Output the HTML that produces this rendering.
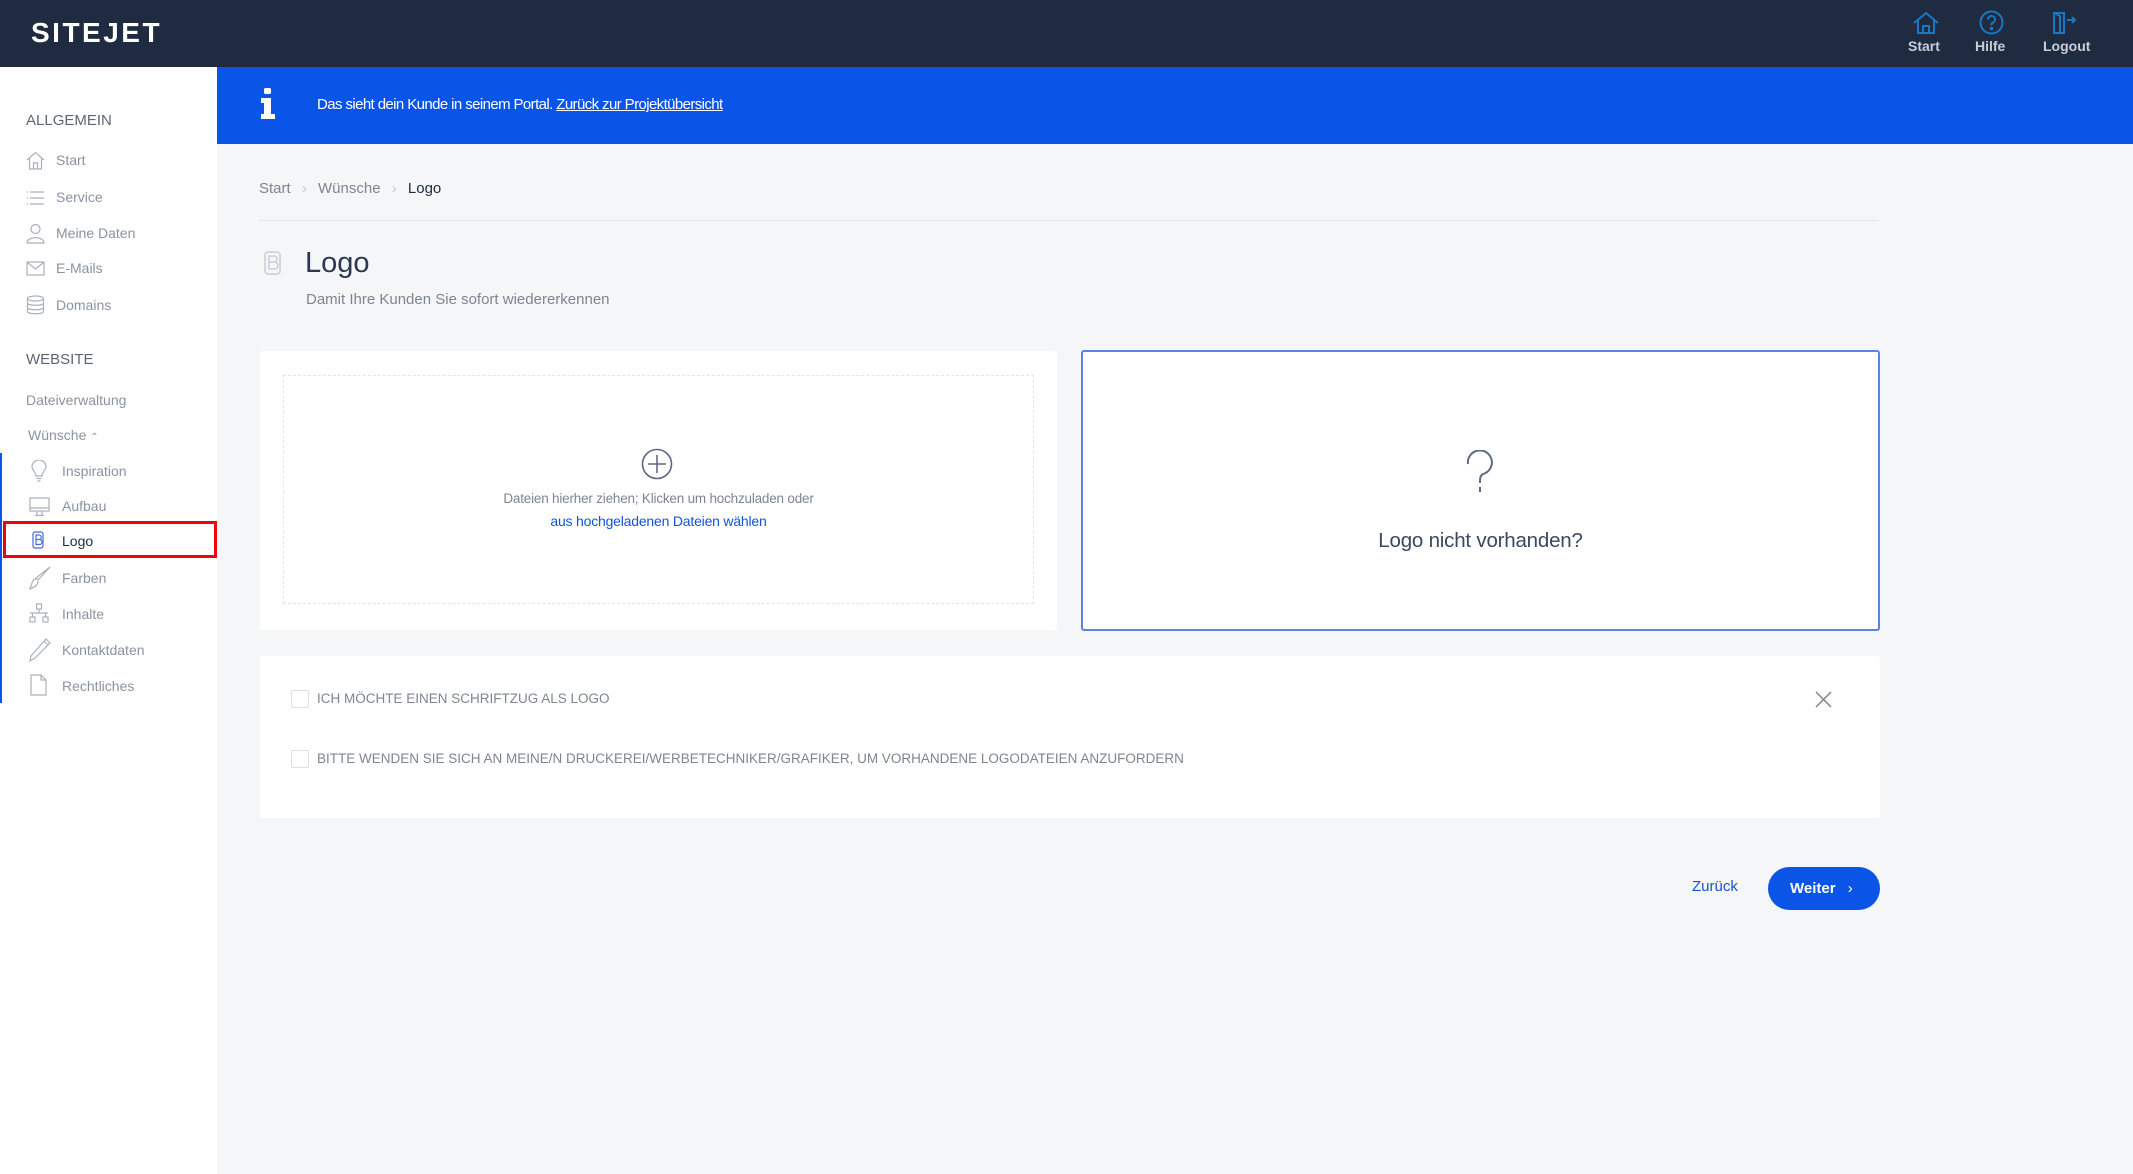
<!DOCTYPE html>
<html><head><meta charset="utf-8"><style>
*{margin:0;padding:0;box-sizing:border-box}
body{width:2133px;height:1174px;position:relative;overflow:hidden;background:#f5f6f8;font-family:"Liberation Sans",sans-serif;color:#8a93a0}
.a{position:absolute}
#hdr{left:0;top:0;width:2133px;height:67px;background:#1e2b40}
#side{left:0;top:67px;width:217px;height:1107px;background:#fff}
#ban{left:217px;top:67px;width:1916px;height:77px;background:#0a55e8}
.si{position:absolute;font-size:14px;color:#8a93a0;white-space:nowrap}
.ic{position:absolute}
.card{position:absolute;background:#fff;border-radius:3px}
.cb{position:absolute;width:18px;height:18px;border:1px solid #dde1e6;border-radius:2px;background:#fff}
.ct{position:absolute;font-size:13.5px;color:#7d8591;white-space:nowrap;letter-spacing:0px}
</style></head><body>
<div id="hdr" class="a"></div>
<div class="a" style="left:31px;top:17px;font-size:28px;font-weight:bold;color:#fff;letter-spacing:2.5px">SITEJET</div>
<svg class="a" style="left:1912px;top:11px" width="28" height="24" viewBox="0 0 28 24" fill="none" stroke="#1a78c2" stroke-width="2"><path d="M2 12 L14 2 L26 12 M6 9 V22 H22 V9 M11 22 V15 H17 V22"/></svg>
<div class="a" style="left:1908px;top:38px;font-size:14px;font-weight:bold;color:#c9ced6">Start</div>
<svg class="a" style="left:1979px;top:10px" width="25" height="25" viewBox="0 0 25 25" fill="none" stroke="#1a78c2" stroke-width="2"><circle cx="12.5" cy="12.5" r="11"/><path d="M9 9.5a3.5 3.5 0 1 1 4.5 3.3c-1 .4-1 1-1 2.5"/><circle cx="12.5" cy="18.5" r=".8" fill="#1a78c2"/></svg>
<div class="a" style="left:1975px;top:38px;font-size:14px;font-weight:bold;color:#c9ced6">Hilfe</div>
<svg class="a" style="left:2052px;top:11px" width="26" height="24" viewBox="0 0 26 24" fill="none" stroke="#1a78c2" stroke-width="2"><path d="M2 2 H12 V22 H2 Z M2 2 L8 5 V22 M15 9 H23 M20 6 L23 9 L20 12"/></svg>
<div class="a" style="left:2043px;top:38px;font-size:14px;font-weight:bold;color:#c9ced6">Logout</div>

<div id="side" class="a"></div>
<div class="si" style="left:26px;top:112px;font-size:15px;color:#5d6674">ALLGEMEIN</div>
<svg class="ic" style="left:26px;top:151px" width="19" height="19" viewBox="0 0 19 19" fill="none" stroke="#aab1bb" stroke-width="1.2"><path d="M1 9 L9.5 1.5 L18 9 M3.5 7 V18 H15.5 V7 M7.5 18 V12 H11.5 V18"/></svg>
<div class="si" style="left:56px;top:152px">Start</div>
<svg class="ic" style="left:26px;top:190px" width="19" height="16" viewBox="0 0 19 16" fill="none" stroke="#aab1bb" stroke-width="1.2"><path d="M4 2 H18 M4 8 H18 M4 14 H18 M1 2 H2 M1 8 H2 M1 14 H2"/></svg>
<div class="si" style="left:56px;top:189px">Service</div>
<svg class="ic" style="left:26px;top:223px" width="19" height="21" viewBox="0 0 19 21" fill="none" stroke="#aab1bb" stroke-width="1.2"><circle cx="9.5" cy="6" r="4.5"/><path d="M1 20 C1 13 18 13 18 20 Z"/></svg>
<div class="si" style="left:56px;top:225px">Meine Daten</div>
<svg class="ic" style="left:26px;top:261px" width="19" height="15" viewBox="0 0 19 15" fill="none" stroke="#aab1bb" stroke-width="1.2"><rect x="1" y="1" width="17" height="13"/><path d="M1 1 L9.5 8 L18 1"/></svg>
<div class="si" style="left:56px;top:260px">E-Mails</div>
<svg class="ic" style="left:26px;top:295px" width="19" height="20" viewBox="0 0 19 20" fill="none" stroke="#aab1bb" stroke-width="1.2"><ellipse cx="9.5" cy="3.5" rx="8" ry="2.5"/><path d="M1.5 3.5 V16.5 C1.5 19.5 17.5 19.5 17.5 16.5 V3.5 M1.5 8 C1.5 11 17.5 11 17.5 8 M1.5 12.5 C1.5 15.5 17.5 15.5 17.5 12.5"/></svg>
<div class="si" style="left:56px;top:297px">Domains</div>
<div class="si" style="left:26px;top:351px;font-size:15px;color:#5d6674">WEBSITE</div>
<div class="si" style="left:26px;top:392px">Dateiverwaltung</div>
<div class="si" style="left:28px;top:427px">Wünsche <span style="font-size:10px">&#8963;</span></div>
<div class="a" style="left:0;top:453px;width:2px;height:250px;background:#0a55e8"></div>
<svg class="ic" style="left:31px;top:460px" width="16" height="22" viewBox="0 0 16 22" fill="none" stroke="#aab1bb" stroke-width="1.2"><path d="M5 16 C5 12 1 10 1 7 A7 7 0 0 1 15 7 C15 10 11 12 11 16 Z M5.5 18.5 H10.5 M6.5 21 H9.5"/></svg>
<div class="si" style="left:62px;top:463px">Inspiration</div>
<svg class="ic" style="left:29px;top:497px" width="21" height="20" viewBox="0 0 21 20" fill="none" stroke="#aab1bb" stroke-width="1.2"><rect x="1" y="1" width="19" height="13"/><path d="M1 11 H20 M8 14 V18 M13 14 V18 M6 18.5 H15"/></svg>
<div class="si" style="left:62px;top:498px">Aufbau</div>
<div class="a" style="left:3px;top:521px;width:214px;height:37px;border:3px solid #e8070d"></div>
<svg class="ic" style="left:32px;top:531px" width="12" height="18" viewBox="0 0 12 18" fill="none" stroke="#4a6ad8" stroke-width="1.2"><rect x="1" y="1" width="10" height="16" rx="2"/><path d="M4 4 H7 A2 2 0 0 1 7 8.5 H4 Z M4 8.5 H7.5 A2.3 2.3 0 0 1 7.5 13.5 H4 Z"/></svg>
<div class="si" style="left:62px;top:533px;color:#1e2b40">Logo</div>
<svg class="ic" style="left:29px;top:566px" width="22" height="24" viewBox="0 0 22 24" fill="none" stroke="#aab1bb" stroke-width="1.2"><path d="M21 1 L9 14 L7 12 Z M7 13 C3 13 3 18 1 23 C6 21 9 19 9 15"/></svg>
<div class="si" style="left:62px;top:570px">Farben</div>
<svg class="ic" style="left:29px;top:603px" width="20" height="20" viewBox="0 0 20 20" fill="none" stroke="#aab1bb" stroke-width="1.2"><rect x="7.5" y="1" width="5" height="5"/><rect x="1" y="14" width="5" height="5"/><rect x="14" y="14" width="5" height="5"/><path d="M10 6 V10 M1 10 H19 M3.5 10 V14 M16.5 10 V14"/></svg>
<div class="si" style="left:62px;top:606px">Inhalte</div>
<svg class="ic" style="left:29px;top:638px" width="22" height="24" viewBox="0 0 22 24" fill="none" stroke="#aab1bb" stroke-width="1.2"><path d="M17 1 L21 5 L6 20 L1 23 L2 18 Z M15 3 L19 7"/></svg>
<div class="si" style="left:62px;top:642px">Kontaktdaten</div>
<svg class="ic" style="left:30px;top:674px" width="17" height="22" viewBox="0 0 17 22" fill="none" stroke="#aab1bb" stroke-width="1.2"><path d="M1 1 H11 L16 6 V21 H1 Z M11 1 V6 H16"/></svg>
<div class="si" style="left:62px;top:678px">Rechtliches</div>

<div id="ban" class="a"></div>
<svg class="a" style="left:259px;top:88px" width="18" height="32" viewBox="0 0 18 32"><rect x="5" y="0" width="7" height="6" rx="1.5" fill="#fff"/><path d="M2 10 H12 V26 H16 V31 H2 V26 H5 V15 H2 Z" fill="#fff"/></svg>
<div class="a" style="left:317px;top:96px;font-size:15px;color:#fff;letter-spacing:-0.6px;white-space:nowrap">Das sieht dein Kunde in seinem Portal. <u>Zurück zur Projektübersicht</u></div>

<div class="a" style="left:259px;top:180px;font-size:15px;color:#7d8591;white-space:nowrap">Start <span style="color:#c5cad1;margin:0 7px">›</span> Wünsche <span style="color:#c5cad1;margin:0 7px">›</span> <span style="color:#1e2b40">Logo</span></div>
<div class="a" style="left:259px;top:220px;width:1620px;height:1px;background:#e3e6ea"></div>
<svg class="a" style="left:264px;top:251px" width="17" height="24" viewBox="0 0 17 24" fill="none" stroke="#c8ced6" stroke-width="1.5"><rect x="1" y="1" width="15" height="22" rx="3"/><path d="M5 5 H10 A3 3 0 0 1 10 11 H5 Z M5 11 H10.5 A3.5 3.5 0 0 1 10.5 18 H5 Z"/></svg>
<div class="a" style="left:305px;top:247px;font-size:29px;color:#2b3950">Logo</div>
<div class="a" style="left:306px;top:291px;font-size:15px;color:#7d8591">Damit Ihre Kunden Sie sofort wiedererkennen</div>

<div class="card" style="left:260px;top:351px;width:797px;height:279px"></div>
<div class="a" style="left:283px;top:375px;width:751px;height:229px;border:1px dashed #e1e4e8"></div>
<svg class="a" style="left:641px;top:448px" width="32" height="32" viewBox="0 0 32 32" fill="none" stroke="#5d6a80" stroke-width="1.6"><circle cx="16" cy="16" r="14.5"/><path d="M16 7 V25 M7 16 H25"/></svg>
<div class="a" style="left:283px;top:491px;width:751px;text-align:center;font-size:13.5px;color:#7d8591;letter-spacing:-0.2px">Dateien hierher ziehen; Klicken um hochzuladen oder</div>
<div class="a" style="left:283px;top:513px;width:751px;text-align:center;font-size:14px;color:#1452d8;letter-spacing:-0.2px">aus hochgeladenen Dateien wählen</div>

<div class="card" style="left:1081px;top:350px;width:799px;height:281px;border:2px solid #5b84e0"></div>
<svg class="a" style="left:1463px;top:450px" width="34" height="48" viewBox="0 0 34 48" fill="none" stroke="#5d6a80" stroke-width="2"><path d="M5 14 A12 12 0 1 1 20 24 C17 26 17 28 17 33 M17 37 V42"/></svg>
<div class="a" style="left:1081px;top:529px;width:799px;text-align:center;font-size:20.5px;color:#3a4860;letter-spacing:-0.2px">Logo nicht vorhanden?</div>

<div class="card" style="left:260px;top:656px;width:1620px;height:162px"></div>
<div class="cb" style="left:291px;top:690px"></div>
<div class="ct" style="left:317px;top:691px">ICH MÖCHTE EINEN SCHRIFTZUG ALS LOGO</div>
<div class="cb" style="left:291px;top:750px"></div>
<div class="ct" style="left:317px;top:751px">BITTE WENDEN SIE SICH AN MEINE/N DRUCKEREI/WERBETECHNIKER/GRAFIKER, UM VORHANDENE LOGODATEIEN ANZUFORDERN</div>
<svg class="a" style="left:1815px;top:691px" width="17" height="17" viewBox="0 0 17 17" stroke="#7d8591" stroke-width="1.5"><path d="M1 1 L16 16 M16 1 L1 16"/></svg>

<div class="a" style="left:1692px;top:878px;font-size:15px;color:#1452d8">Zurück</div>
<div class="a" style="left:1768px;top:867px;width:112px;height:43px;border-radius:22px;background:#0a55e8;color:#fff;font-size:15px;font-weight:bold;line-height:43px;padding-left:22px">Weiter <span style="font-weight:normal;margin-left:8px">›</span></div>
</body></html>
